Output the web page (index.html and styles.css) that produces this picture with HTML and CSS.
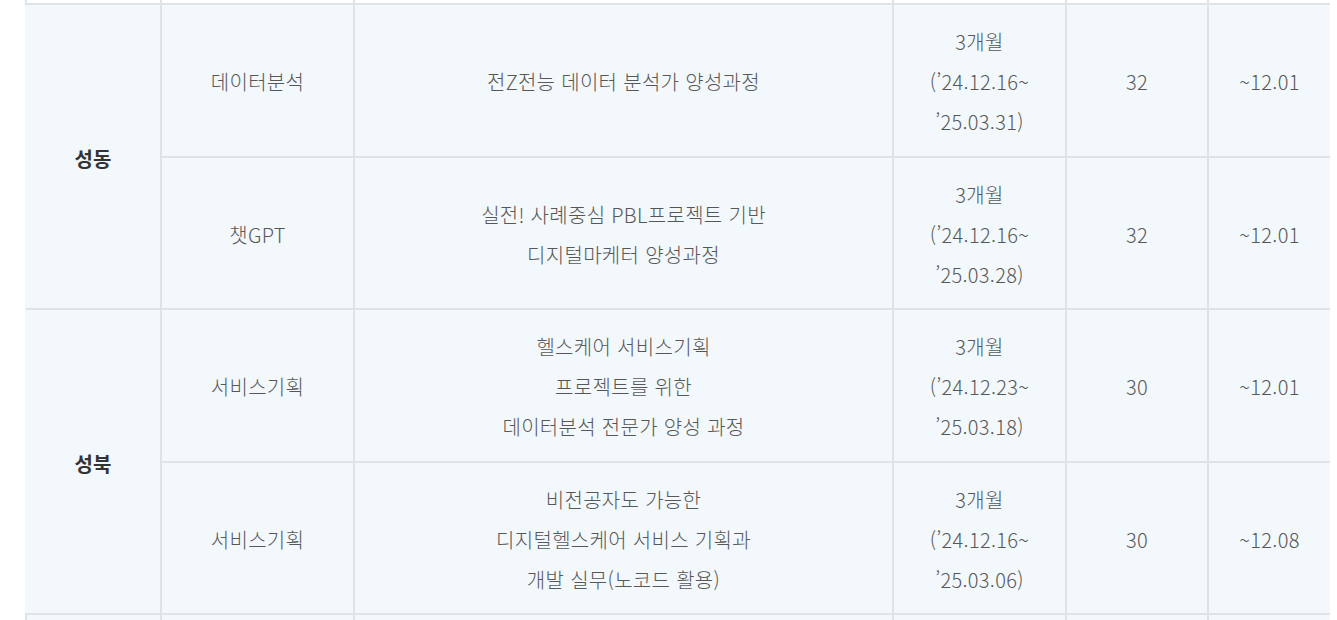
FILE: index.html
```html
<!DOCTYPE html>
<html lang="ko">
<head>
<meta charset="utf-8">
<title>교육과정 안내</title>
<link rel="stylesheet" href="styles.css">
</head>
<body>
<table class="course-table">
  <colgroup>
    <col class="c-region">
    <col class="c-field">
    <col class="c-name">
    <col class="c-period">
    <col class="c-count">
    <col class="c-deadline">
  </colgroup>
  <tbody>
    <tr class="stub-row stub-top">
      <td></td><td></td><td></td><td></td><td></td><td></td>
    </tr>
    <tr>
      <th class="region" rowspan="2">성동</th>
      <td>데이터분석</td>
      <td>전Z전능 데이터 분석가 양성과정</td>
      <td>3개월<br>(’24.12.16~<br>’25.03.31)</td>
      <td>32</td>
      <td>~12.01</td>
    </tr>
    <tr>
      <td>챗GPT</td>
      <td>실전! 사례중심 PBL프로젝트 기반<br>디지털마케터 양성과정</td>
      <td>3개월<br>(’24.12.16~<br>’25.03.28)</td>
      <td>32</td>
      <td>~12.01</td>
    </tr>
    <tr>
      <th class="region" rowspan="2">성북</th>
      <td>서비스기획</td>
      <td>헬스케어 서비스기획<br>프로젝트를 위한<br>데이터분석 전문가 양성 과정</td>
      <td>3개월<br>(’24.12.23~<br>’25.03.18)</td>
      <td>30</td>
      <td>~12.01</td>
    </tr>
    <tr>
      <td>서비스기획</td>
      <td>비전공자도 가능한<br>디지털헬스케어 서비스 기획과<br>개발 실무(노코드 활용)</td>
      <td>3개월<br>(’24.12.16~<br>’25.03.06)</td>
      <td>30</td>
      <td>~12.08</td>
    </tr>
    <tr class="stub-row stub-bottom">
      <td></td><td></td><td></td><td></td><td></td><td></td>
    </tr>
  </tbody>
</table>
</body>
</html>
```

FILE: styles.css
```css
html, body {
  margin: 0;
  padding: 0;
  background: #ffffff;
}

body {
  font-family: "Noto Sans CJK KR", "Noto Sans", sans-serif;
  overflow: hidden;
}

.course-table {
  margin-left: 25px;
  width: 1304px;
  table-layout: fixed;
  border-collapse: collapse;
  background: #f2f8fc;
  color: #575757;
  font-size: 20px;
  font-weight: 300;
  line-height: 40px;
  text-align: center;
  letter-spacing: 0.3px;
}

.c-region { width: 135px; }
.c-field { width: 193px; }
.c-name { width: 539px; }
.c-period { width: 173px; }
.c-count { width: 142px; }
.c-deadline { width: 122px; }

.course-table td,
.course-table th {
  border: 2px solid #e0e3e6;
  padding: 17.25px 10px 13.25px;
  vertical-align: middle;
}

.course-table tr > :first-child {
  border-left: none;
}

.course-table tr > :last-child {
  border-right: none;
}

.course-table tr > td:first-child:not(:only-child) {
  border-left: 2px solid #e0e3e6;
}

.course-table .stub-row td {
  padding: 0;
  line-height: 0;
  font-size: 0;
}

.course-table .stub-row td:first-child {
  border-left: none;
}

.stub-top td {
  height: 3px;
  border-top: none;
  background: #ffffff;
}

.stub-bottom td {
  height: 20px;
}

.region {
  font-weight: 700;
  color: #333333;
  letter-spacing: 0;
}
```
